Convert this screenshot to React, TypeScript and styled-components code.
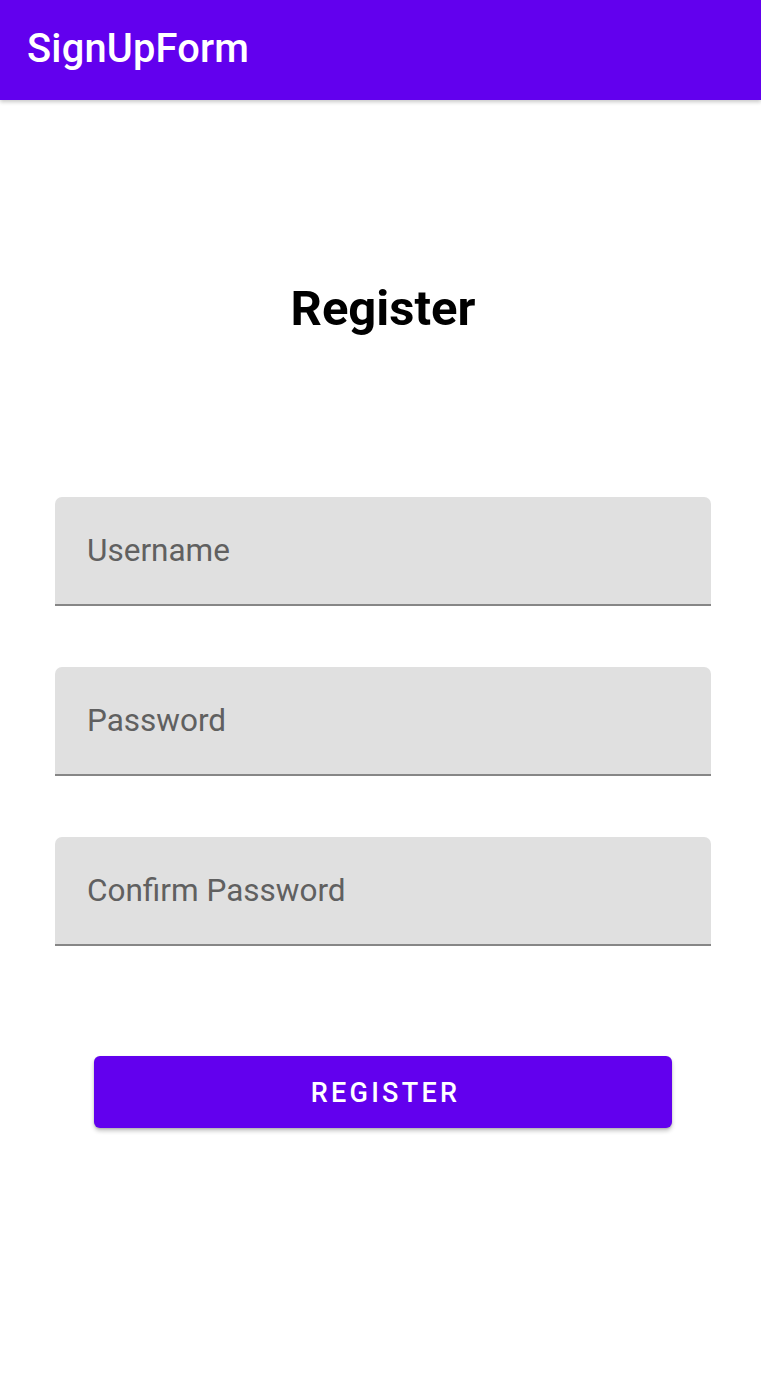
import React from "react";
import styled, { createGlobalStyle } from "styled-components";

const Global = createGlobalStyle`
  html, body { margin: 0; padding: 0; background: #ffffff; }
  body { font-family: Roboto, "Noto Sans", sans-serif; }
  * { box-sizing: border-box; }
`;

const Screen = styled.div`
  width: 761px;
  min-height: 1399px;
  background: #ffffff;
  display: flex;
  flex-direction: column;
`;

const AppBar = styled.header`
  height: 100px;
  background: #6200ee;
  display: flex;
  align-items: center;
  padding-left: 27px;
  box-shadow: 0 2px 4px rgba(0, 0, 0, 0.22);
  position: relative;
  z-index: 1;
`;

const AppTitle = styled.h1`
  margin: 0;
  color: #ffffff;
  font-family: Roboto, sans-serif;
  font-weight: 500;
  font-size: 39.8px;
  letter-spacing: 0.2px;
  margin-top: -4px;
`;

const Content = styled.main`
  display: flex;
  flex-direction: column;
  align-items: center;
  padding-top: 178px;
  padding-left: 5px;
`;

const Heading = styled.h2`
  margin: 0;
  font-family: Roboto, sans-serif;
  font-weight: 700;
  font-size: 49px;
  color: #000000;
  line-height: 62px;
`;

const Form = styled.form`
  display: flex;
  flex-direction: column;
  gap: 61px;
  width: 656px;
  margin-top: 157px;
`;

const Field = styled.div`
  height: 109px;
  background: #e0e0e0;
  border-radius: 7px 7px 0 0;
  border-bottom: 2px solid #868686;
  display: flex;
  align-items: center;
  padding: 0 32px;
`;

const Placeholder = styled.span`
  font-family: Roboto, sans-serif;
  font-size: 31.5px;
  color: #606060;
  margin-top: -1px;
`;

const Button = styled.button`
  margin-top: 110px;
  width: 578px;
  height: 72px;
  padding-top: 3px;
  border: none;
  border-radius: 6px;
  background: #6200ee;
  color: #ffffff;
  font-family: Roboto, sans-serif;
  font-weight: 500;
  font-size: 27px;
  letter-spacing: 3.3px;
  text-indent: 5px;
  box-shadow: 0 3px 4px rgba(0, 0, 0, 0.22), 0 1px 2px rgba(0, 0, 0, 0.14);
  cursor: pointer;
`;

const fields = ["Username", "Password", "Confirm Password"];

export default function App() {
  return (
    <>
      <Global />
      <Screen>
        <AppBar>
          <AppTitle>SignUpForm</AppTitle>
        </AppBar>
        <Content>
          <Heading>Register</Heading>
          <Form onSubmit={(e) => e.preventDefault()}>
            {fields.map((f) => (
              <Field key={f}>
                <Placeholder>{f}</Placeholder>
              </Field>
            ))}
          </Form>
          <Button type="button">REGISTER</Button>
        </Content>
      </Screen>
    </>
  );
}
